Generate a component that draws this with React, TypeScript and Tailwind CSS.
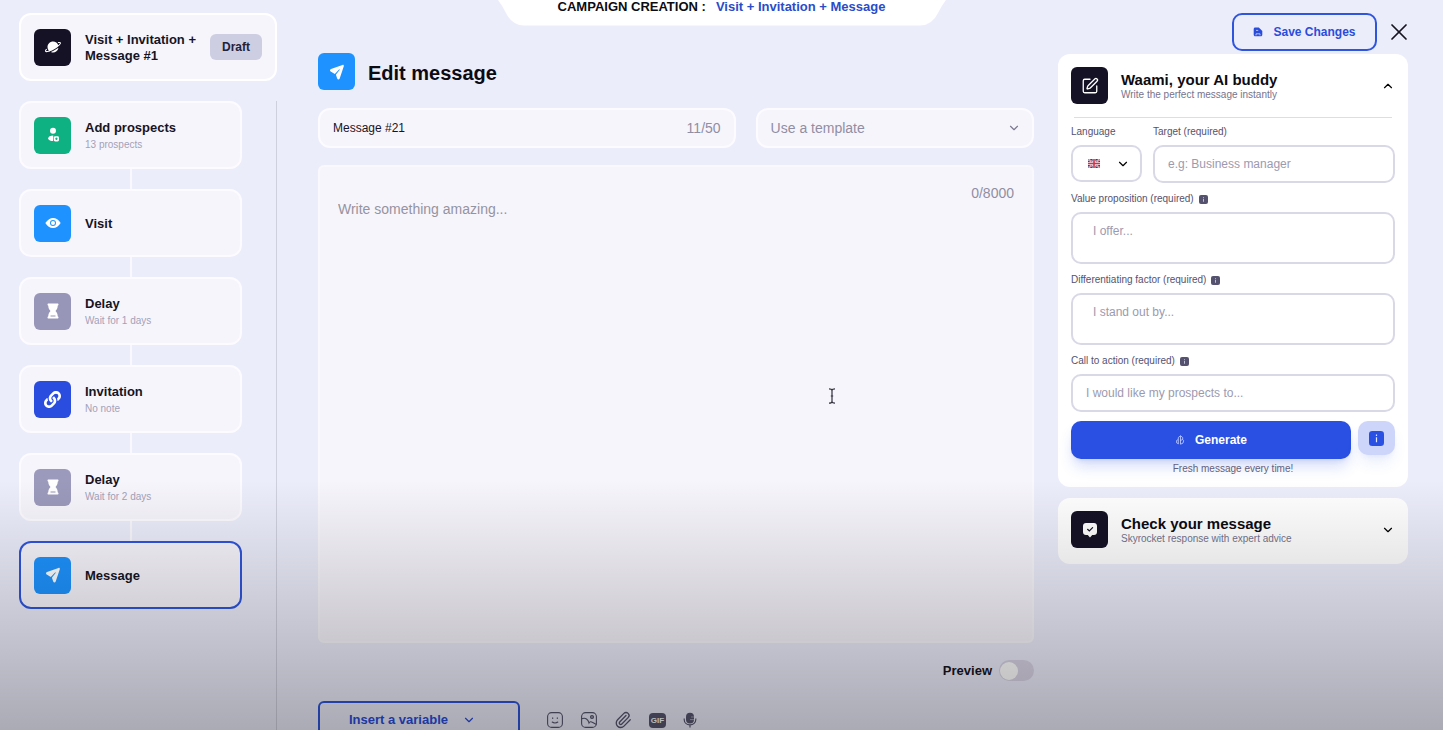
import type { ReactNode } from 'react';
import { ChevronDown, ChevronUp, Paperclip, SquarePen, X } from 'lucide-react';
import { FaLink } from 'react-icons/fa';
import { IoEye, IoPlanet } from 'react-icons/io5';

function PlaneIcon() {
  return (
    <svg viewBox="0 0 16 16" className="w-4 h-4" fill="currentColor" aria-hidden="true">
      <path d="M13.500.9 2 4.900C.8 5.300.7 6.900 1.700 7.500l3.700 2.300c.3.200.7.100.9-.2l4-4.300.5.500-3.600 4.400c-.2.300-.3.600-.2.900l1.200 3.400c.4 1.200 2.100 1.200 2.500 0l4.100-12.200c.3-.9-.4-1.700-1.300-1.400z" />
    </svg>
  );
}

function ProspectIcon() {
  return (
    <svg viewBox="0 0 16 18" className="w-4 h-[18px]" aria-hidden="true">
      <circle cx="8" cy="4.800" r="3" fill="#fff" />
      <path d="M8.300 9.400c-3 0-5.100 1-5.100 2.900s2 2.800 4.900 2.800z" fill="#fff" />
      <rect x="8.800" y="10.200" width="5.200" height="5.200" rx="1.400" fill="#fff" />
      <path d="M11.400 11.600v2.400M10.200 12.800h2.400" stroke="#0eb182" strokeWidth="1" />
    </svg>
  );
}

function HourglassIcon() {
  return (
    <svg viewBox="0 0 16 18" className="w-4 h-[18px]" aria-hidden="true">
      <path
        d="M3.500 1.500h9c.6 0 1 .4 1 1s-.3 1-.8 1.200c0 2.200-.6 3.600-2.200 5.300 1.600 1.700 2.200 3.100 2.200 5.300.5.200.8.600.8 1.200s-.4 1-1 1h-9c-.6 0-1-.4-1-1s.3-1 .8-1.200c0-2.200.6-3.600 2.200-5.300-1.600-1.700-2.200-3.100-2.200-5.300-.5-.2-.8-.6-.8-1.200s.4-1 1-1z"
        fill="#fff"
      />
      <path d="M6 14h4" stroke="#b9b7d0" strokeWidth="1.400" strokeLinecap="round" />
    </svg>
  );
}

function CheckBubbleIcon() {
  return (
    <svg viewBox="0 0 16 16" className="w-4 h-4" aria-hidden="true">
      <path
        d="M4 1h8c1.800 0 3 1.200 3 3v6c0 1.800-1.200 3-3 3h-1.800L8 15.600 5.800 13H4c-1.800 0-3-1.200-3-3V4c0-1.800 1.200-3 3-3z"
        fill="#fff"
      />
      <path d="m5.600 7.300 1.700 1.600 3.300-3.300" fill="none" stroke="#151226" strokeWidth="1.200" strokeLinecap="round" />
    </svg>
  );
}

function SaveIcon() {
  return (
    <svg viewBox="0 0 10 10" className="w-[10px] h-[10px]" aria-hidden="true">
      <path d="M2.200.5h3.600L9.300 4v3.800c0 .9-.6 1.500-1.500 1.500H2.200C1.300 9.300.7 8.700.7 7.800V2C.7 1.100 1.300.5 2.200.5z" fill="#2a4cdb" />
      <path d="M3 3.400h2.200M3 8.400V6.800h4v1.600" fill="none" stroke="#ecedfb" strokeWidth=".7" />
    </svg>
  );
}

function SparkIcon() {
  return (
    <svg viewBox="0 0 10 10" className="w-[10px] h-[10px]" fill="none" stroke="#c9d3ff" strokeWidth=".8" aria-hidden="true">
      <path d="M5.500.8v8.400M5.500.8 3.300 2.500v2L1.600 5.500v2.300l2 1M5.500.8l2.200 1.700v2l1 1.300-.8 2.400-2.400 1M3.300 4.500v4.300M5.500 5.500l2.200-1" />
    </svg>
  );
}

function FlagIcon() {
  return (
    <svg viewBox="0 0 12 9" className="w-3 h-[9px]" aria-hidden="true">
      <rect width="12" height="9" rx="1" fill="#3b3f77" />
      <path d="m0 0 12 9M12 0 0 9" stroke="#f2e8ee" strokeWidth="1.800" />
      <path d="m0 0 12 9M12 0 0 9" stroke="#d2334a" strokeWidth=".7" />
      <path d="M6 0v9M0 4.500h12" stroke="#f2e8ee" strokeWidth="2.800" />
      <path d="M6 0v9M0 4.500h12" stroke="#d2334a" strokeWidth="1.600" />
    </svg>
  );
}

function InfoIcon({ className }: { className: string }) {
  return (
    <svg viewBox="0 0 10 10" className={className} aria-hidden="true">
      <rect width="10" height="10" rx="2.200" fill="currentColor" />
      <path d="M5 4.200v3.300M5 2.400v.9" stroke="#e6e9fb" strokeWidth=".8" />
    </svg>
  );
}

function SmileIcon() {
  return (
    <svg viewBox="0 0 16 16" className="w-4 h-4" fill="none" stroke="currentColor" strokeWidth="1.100" strokeLinecap="round" aria-hidden="true">
      <rect x=".6" y=".6" width="14.800" height="14.800" rx="4" />
      <path d="M5.700 5.700v.8M10.300 5.700v.8M5.200 10c1.400 1.300 4.200 1.300 5.600 0" />
    </svg>
  );
}

function PictureIcon() {
  return (
    <svg viewBox="0 0 16 16" className="w-4 h-4" fill="none" stroke="currentColor" strokeWidth="1.100" aria-hidden="true">
      <rect x=".6" y=".6" width="14.800" height="14.800" rx="4" />
      <circle cx="11" cy="5" r="1.500" fill="currentColor" fillOpacity=".5" />
      <path d="M.6 6.800c4-1.600 6.600.6 7.400 4.200.8-1.400 2-1.700 3.300-.8l4.100 2.200" />
    </svg>
  );
}

function MicIcon() {
  return (
    <svg viewBox="0 0 14 16" className="w-[14px] h-4" aria-hidden="true">
      <rect x="3" y=".8" width="8" height="10.700" rx="4" fill="currentColor" />
      <path d="M1.200 6.500v1c0 3.200 2.600 5.300 5.800 5.300s5.800-2.100 5.800-5.300v-1M7 13v2.500" fill="none" stroke="currentColor" strokeWidth="1.200" />
      <path d="M8 5h3M7 7.600h4" stroke="#b4b5c1" strokeWidth=".8" />
    </svg>
  );
}

function IconTile({ className, children }: { className: string; children: ReactNode }) {
  return (
    <span className={`flex items-center justify-center shrink-0 w-[37px] h-[37px] rounded-md text-white ${className}`}>
      {children}
    </span>
  );
}

const steps = [
  { title: 'Add prospects', note: '13 prospects', tile: 'bg-[#0eb182]', icon: <ProspectIcon /> },
  { title: 'Visit', tile: 'bg-[#1e93ff]', icon: <IoEye size={16} /> },
  { title: 'Delay', note: 'Wait for 1 days', tile: 'bg-[#9896b8]', icon: <HourglassIcon /> },
  { title: 'Invitation', note: 'No note', tile: 'bg-[#2a4cdf]', icon: <FaLink size={17} /> },
  { title: 'Delay', note: 'Wait for 2 days', tile: 'bg-[#9c9abc]', icon: <HourglassIcon /> },
  { title: 'Message', tile: 'bg-[#1e93ff]', icon: <PlaneIcon />, active: true },
];

function Sidebar() {
  return (
    <aside className="flex flex-col gap-5 shrink-0 w-[258px] pt-[13px]">
      <div className="flex items-center h-[68px] px-[13px] rounded-xl border-2 border-white bg-[#f7f5fc]">
        <IconTile className="bg-[#151226]">
          <IoPlanet size={16} className="-scale-x-100" />
        </IconTile>
        <h2 className="flex-1 ml-[14px] pt-[2px] text-[13px] leading-4 font-bold text-[#16141f]">
          Visit + Invitation + Message #1
        </h2>
        <span className="px-3 py-[5px] rounded-md bg-[#cdcee2] text-xs font-bold text-[#24223a]">Draft</span>
      </div>
      <nav className="flex-1 pr-[34px] border-r border-[#cfd0de]">
        <ol>
          {steps.map((step, i) => (
            <li key={i}>
              {i > 0 && <div className="mx-auto w-[2px] h-5 bg-[#f8f8fe]" />}
              <button
                className={`flex items-center w-full h-[68px] px-[13px] rounded-xl border-2 bg-[#f7f5fc] text-left ${
                  step.active ? 'border-[#2f55dc]' : 'border-[#fcfbff]'
                }`}
              >
                <IconTile className={step.tile}>{step.icon}</IconTile>
                <span className="ml-[14px] pt-[2px]">
                  <span className="block text-[13px] leading-4 font-bold text-[#16141f]">{step.title}</span>
                  {step.note && <span className="block mt-[2px] text-[10px] leading-[14px] text-[#a3a1b8]">{step.note}</span>}
                </span>
              </button>
            </li>
          ))}
        </ol>
      </nav>
    </aside>
  );
}

function Editor() {
  return (
    <main className="flex-1 min-w-0 ml-[41px] mr-6 pt-[53px]">
      <div className="flex items-center gap-[13px]">
        <IconTile className="bg-[#1e93ff]">
          <PlaneIcon />
        </IconTile>
        <h1 className="pt-[2px] text-xl font-bold text-[#0c0b12]">Edit message</h1>
      </div>

      <div className="grid grid-cols-[3fr_2fr] gap-5 mt-[18px]">
        <div className="flex items-center h-10 px-[13px] rounded-xl border-2 border-[#fcfbff] bg-[#f7f5fc]">
          <input
            aria-label="Message name"
            defaultValue="Message #21"
            className="flex-1 min-w-0 bg-transparent outline-none text-xs text-[#16141f]"
          />
          <span className="text-sm text-[#908ea3]">11/50</span>
        </div>
        <div className="relative">
          <select
            aria-label="Template"
            className="appearance-none w-full h-10 px-[13px] rounded-xl border-2 border-[#fcfbff] bg-[#f7f5fc] outline-none text-sm text-[#908ea3]"
          >
            <option>Use a template</option>
          </select>
          <ChevronDown size={14} strokeWidth={2} className="absolute right-[13px] top-[13px] text-[#7c7a90] pointer-events-none" />
        </div>
      </div>

      <div className="flex flex-col h-[478px] mt-[17px] px-[18px] pt-[18px] rounded-md border-2 border-[#f9f8fd] bg-[#f7f5fc]">
        <span className="self-end text-sm leading-4 text-[#908ea3]">0/8000</span>
        <textarea
          aria-label="Message"
          placeholder="Write something amazing..."
          className="flex-1 w-full resize-none bg-transparent outline-none text-sm leading-4 text-[#16141f] placeholder:text-[#95939f]"
        />
      </div>

      <label className="flex items-center justify-end gap-[7px] mt-[17px] text-[13px] leading-[21px] font-bold text-[#16141f]">
        Preview
        <input
          type="checkbox"
          role="switch"
          className="appearance-none flex items-center w-[35px] h-[21px] px-px rounded-full bg-[#d9d4e6] before:w-[18px] before:h-[18px] before:rounded-full before:bg-white"
        />
      </label>

      <div className="flex items-center gap-9 mt-5">
        <button className="flex items-center w-[202px] h-[38px] pl-[29px] gap-[14px] rounded-md border-2 border-[#2f55dc] text-[13px] font-bold text-[#2a4cdb]">
          Insert a variable
          <ChevronDown size={14} strokeWidth={2} />
        </button>
        <div className="flex items-center gap-[18px] -ml-[9px] text-[#575670]">
          <button aria-label="Emoji">
            <SmileIcon />
          </button>
          <button aria-label="Image">
            <PictureIcon />
          </button>
          <button aria-label="Attachment">
            <Paperclip size={18} strokeWidth={1.75} className="-mx-px" />
          </button>
          <button className="w-[17px] h-[15px] -mr-px rounded-[4px] bg-[#575670] text-center text-[8px] leading-[15px] font-bold text-white">
            GIF
          </button>
          <button aria-label="Voice">
            <MicIcon />
          </button>
        </div>
      </div>
    </main>
  );
}

const field =
  'block w-full rounded-[10px] border-2 border-[#d9d8e6] bg-white outline-none text-xs text-[#16141f] placeholder:text-[#9c9ab0]';
const fieldLabel = 'flex items-center gap-[5px] mb-[6px] text-[10px] leading-[14px] text-[#55526f]';

function PanelHeader({ icon, title, note, open }: { icon: ReactNode; title: string; note: string; open?: boolean }) {
  return (
    <button aria-expanded={!!open} className="flex items-center w-full text-left">
      <IconTile className="bg-[#151226]">{icon}</IconTile>
      <span className="flex-1 ml-[13px] pt-[2px]">
        <span className="block text-[15px] leading-4 font-bold text-[#0c0b12]">{title}</span>
        <span className="block text-[10px] leading-[14px] text-[#76748c]">{note}</span>
      </span>
      {open ? <ChevronUp size={14} strokeWidth={2} /> : <ChevronDown size={14} strokeWidth={2} />}
    </button>
  );
}

function AssistantPanel() {
  return (
    <div className="shrink-0 w-[350px] pt-[13px]">
      <div className="flex items-center justify-end gap-[13px]">
        <button className="flex items-center justify-center gap-[10px] w-[145px] h-[38px] rounded-[10px] border-2 border-[#2f55dc] text-xs font-bold text-[#2a4cdb]">
          <SaveIcon />
          Save Changes
        </button>
        <button aria-label="Close">
          <X size={28} strokeWidth={1.5} className="-mx-[5px] text-[#16141f]" />
        </button>
      </div>

      <section className="mt-[3px] px-[13px] pt-[13px] pb-[11px] rounded-xl bg-white">
        <PanelHeader
          open
          icon={<SquarePen size={18} strokeWidth={1.75} />}
          title="Waami, your AI buddy"
          note="Write the perfect message instantly"
        />
        <hr className="mx-[3px] mt-[13px] mb-[7px] border-[#dddce8]" />

        <form className="flex flex-col gap-[9px]">
          <div className="flex gap-[11px]">
            <div className="w-[71px]">
              <label htmlFor="language" className={fieldLabel}>
                Language
              </label>
              <div className="relative">
                <select id="language" className={`${field} appearance-none h-[37px]`}>
                  <option value="en" aria-label="English" />
                </select>
                <div className="absolute inset-0 flex items-center justify-between pl-[17px] pr-3 pointer-events-none">
                  <FlagIcon />
                  <ChevronDown size={14} strokeWidth={2} />
                </div>
              </div>
            </div>
            <div className="flex-1">
              <label htmlFor="target" className={fieldLabel}>
                Target (required)
              </label>
              <input id="target" placeholder="e.g: Business manager" className={`${field} h-[38px] px-[13px]`} />
            </div>
          </div>
          <div>
            <label htmlFor="value" className={fieldLabel}>
              Value proposition (required)
              <InfoIcon className="w-[9px] h-[9px]" />
            </label>
            <textarea id="value" placeholder="I offer..." className={`${field} h-[52px] px-[20px] py-[9px] resize-none`} />
          </div>
          <div>
            <label htmlFor="factor" className={fieldLabel}>
              Differentiating factor (required)
              <InfoIcon className="w-[9px] h-[9px]" />
            </label>
            <textarea id="factor" placeholder="I stand out by..." className={`${field} h-[52px] px-[20px] py-[9px] resize-none`} />
          </div>
          <div>
            <label htmlFor="action" className={fieldLabel}>
              Call to action (required)
              <InfoIcon className="w-[9px] h-[9px]" />
            </label>
            <input id="action" placeholder="I would like my prospects to..." className={`${field} h-[38px] px-[13px]`} />
          </div>
          <div className="flex items-start gap-[7px]">
            <button
              type="button"
              className="flex flex-1 items-center justify-center gap-[10px] h-[38px] rounded-[10px] bg-[#2a4fe3] text-xs font-bold text-white shadow-lg shadow-[#2a4fe3]/20"
            >
              <SparkIcon />
              Generate
            </button>
            <button
              type="button"
              aria-label="About generation"
              className="flex items-center justify-center w-[37px] h-[34px] rounded-[10px] bg-[#cdd5fa] text-[#2a4fe3] shadow-lg shadow-[#2a4fe3]/10"
            >
              <InfoIcon className="w-[15px] h-[15px]" />
            </button>
          </div>
        </form>
        <p className="mt-[3px] text-center text-[10px] leading-[14px] text-[#63607c]">Fresh message every time!</p>
      </section>

      <section className="mt-[11px] px-[13px] pt-[13px] pb-4 rounded-xl bg-white">
        <PanelHeader icon={<CheckBubbleIcon />} title="Check your message" note="Skyrocket response with expert advice" />
      </section>
    </div>
  );
}

function CampaignTab() {
  return (
    <header className="absolute top-0 left-1/2 -translate-x-1/2 w-[448px] h-[26px]">
      <svg viewBox="0 0 448 26" className="absolute inset-0 w-full h-full" aria-hidden="true">
        <path d="M0 0h448q-4 5-8 13-6 12.500-18 12.500H26Q14 25.500 8 13 4 5 0 0z" fill="#fff" />
      </svg>
      <p className="relative flex justify-center gap-[10px] text-[13px] leading-[14px] font-bold">
        <span className="text-[#0c0b12]">CAMPAIGN CREATION :</span>
        <span className="text-[#2a4cc8]">Visit + Invitation + Message</span>
      </p>
    </header>
  );
}

export default function App() {
  return (
    <div className="relative flex h-screen overflow-hidden pl-[19px] pr-[35px] bg-[#ecedfb] font-['Liberation_Sans',Arial,sans-serif]">
      <CampaignTab />
      <Sidebar />
      <Editor />
      <AssistantPanel />
      <div className="absolute inset-x-0 bottom-0 h-[250px] bg-linear-to-b from-black/0 to-black/28 pointer-events-none" />
      <svg
        viewBox="0 0 8 16"
        className="absolute left-[828px] top-[388px] w-2 h-4 pointer-events-none"
        fill="none"
        stroke="#33313d"
        strokeWidth="1.200"
        aria-hidden="true"
      >
        <path d="M1 .8c2 0 3 .5 3 1.700v11c0 1.200-1 1.700-3 1.700M7 .8c-2 0-3 .5-3 1.700M7 15.200c-2 0-3-.5-3-1.700M2.800 8h2.400" />
      </svg>
    </div>
  );
}
